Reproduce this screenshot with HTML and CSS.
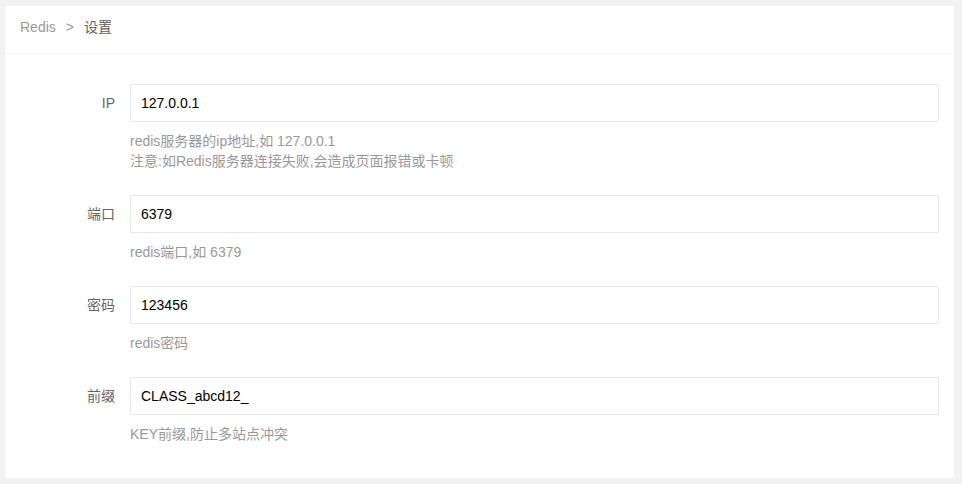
FILE: index.html
```html
<!DOCTYPE html>
<html lang="zh-CN">
<head>
  <meta charset="UTF-8">
  <meta name="viewport" content="width=device-width, initial-scale=1.0">
  <title>Redis 设置</title>
  <link rel="stylesheet" href="styles.css">
</head>
<body>
  <div class="card">
    <div class="card-header">
      <span class="crumb">Redis</span><span class="crumb-sep">&gt;</span><span class="crumb current">设置</span>
    </div>
    <div class="card-body">
      <form class="form">
        <div class="form-item">
          <label class="form-label">IP</label>
          <div class="input-block">
            <input class="input" type="text" value="127.0.0.1">
            <div class="word-aux">redis服务器的ip地址,如 127.0.0.1<br>注意:如Redis服务器连接失败,会造成页面报错或卡顿</div>
          </div>
        </div>
        <div class="form-item">
          <label class="form-label">端口</label>
          <div class="input-block">
            <input class="input" type="text" value="6379">
            <div class="word-aux">redis端口,如 6379</div>
          </div>
        </div>
        <div class="form-item">
          <label class="form-label">密码</label>
          <div class="input-block">
            <input class="input" type="text" value="123456">
            <div class="word-aux">redis密码</div>
          </div>
        </div>
        <div class="form-item">
          <label class="form-label">前缀</label>
          <div class="input-block">
            <input class="input" type="text" value="CLASS_abcd12_">
            <div class="word-aux">KEY前缀,防止多站点冲突</div>
          </div>
        </div>
      </form>
    </div>
  </div>
</body>
</html>
```
FILE: styles.css
```css
/* Basic styling */
* {
  margin: 0;
  padding: 0;
  box-sizing: border-box;
}

body {
  font-family: "Liberation Sans", Arial, "Noto Sans CJK SC", sans-serif;
  font-size: 14px;
  color: #666;
  background: #f2f2f2;
  padding: 6px 8px 0 5px;
}

/* Card */
.card {
  background: #fff;
  border-radius: 2px;
  box-shadow: 0 1px 2px 0 rgba(0, 0, 0, 0.05);
}

.card-header {
  height: 48px;
  line-height: 42px;
  padding: 0 15px;
  border-bottom: 1px solid #f6f6f6;
  color: #999;
}

.crumb-sep {
  margin: 0 10px;
  color: #999;
}

.crumb.current {
  color: #5f5f5f;
}

.card-body {
  padding: 10px 15px;
}

/* Form */
.form {
  padding-top: 20px;
}

.form-item {
  display: flex;
  margin-bottom: 15px;
}

.form-label {
  width: 110px;
  flex-shrink: 0;
  padding: 9px 15px;
  line-height: 20px;
  text-align: right;
  color: #666;
}

.input-block {
  flex: 1;
}

.input {
  display: block;
  width: 100%;
  height: 38px;
  padding-left: 10px;
  border: 1px solid #e6e6e6;
  border-radius: 2px;
  background: #fff;
  font-family: inherit;
  font-size: 14px;
  color: #000;
  outline: none;
}

.word-aux {
  padding: 9px 0;
  line-height: 20px;
  color: #999;
}
```
